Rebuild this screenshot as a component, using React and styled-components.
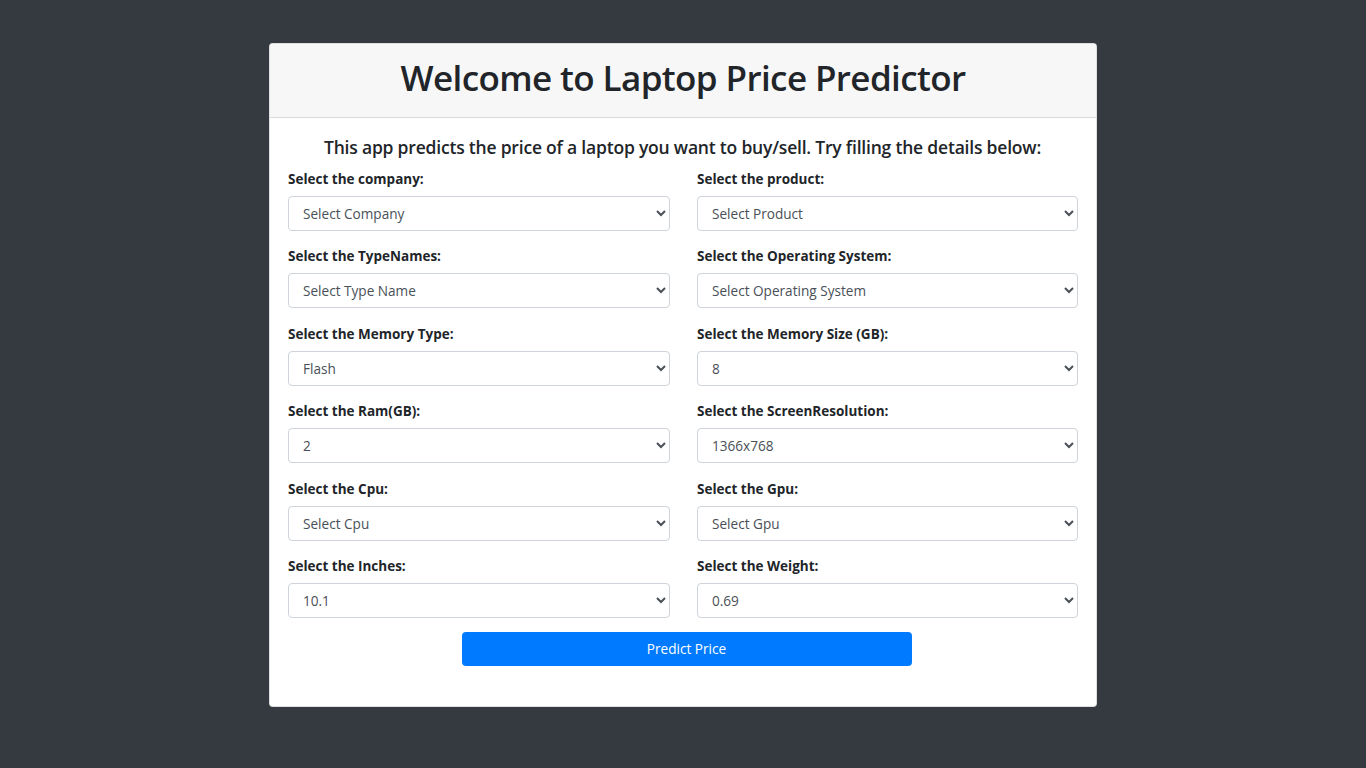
import React from 'react';
import styled, { createGlobalStyle } from 'styled-components';

const GlobalStyle = createGlobalStyle`
	html, body {
		margin: 0;
		background: #343a40;
		font-family: 'Open Sans', 'Liberation Sans', sans-serif;
		font-size: 14px;
		color: #212529;
	}
`;

const fields = [
	{ label: 'Select the company:', value: 'Select Company' },
	{ label: 'Select the product:', value: 'Select Product' },
	{ label: 'Select the TypeNames:', value: 'Select Type Name' },
	{ label: 'Select the Operating System:', value: 'Select Operating System' },
	{ label: 'Select the Memory Type:', value: 'Flash' },
	{ label: 'Select the Memory Size (GB):', value: '8' },
	{ label: 'Select the Ram(GB):', value: '2' },
	{ label: 'Select the ScreenResolution:', value: '1366x768' },
	{ label: 'Select the Cpu:', value: 'Select Cpu' },
	{ label: 'Select the Gpu:', value: 'Select Gpu' },
	{ label: 'Select the Inches:', value: '10.1' },
	{ label: 'Select the Weight:', value: '0.69' },
];

export default function App() {
	return (
		<>
			<GlobalStyle />
			<Page>
				<Card>
					<CardHeader>
						<Title>Welcome to Laptop Price Predictor</Title>
					</CardHeader>
					<CardBody>
						<Lead>This app predicts the price of a laptop you want to buy/sell. Try filling the details below:</Lead>
						<FormGrid>
							{fields.map(f => (
								<Group key={f.label}>
									<Label>{f.label}</Label>
									<Select defaultValue={f.value}>
										<option>{f.value}</option>
									</Select>
								</Group>
							))}
						</FormGrid>
						<ButtonRow>
							<PredictButton>Predict Price</PredictButton>
						</ButtonRow>
					</CardBody>
				</Card>
			</Page>
		</>
	);
}

const Page = styled.div`
	display: flex;
	justify-content: center;
	padding-top: 43px;
	min-height: 768px;
	box-sizing: border-box;
`;
const Card = styled.div`
	width: 828px;
	height: 664px;
	box-sizing: border-box;
	background: #fff;
	border: 1px solid rgba(0, 0, 0, 0.125);
	border-radius: 4px;
	overflow: hidden;
`;
const CardHeader = styled.div`
	height: 73px;
	background: #f7f7f7;
	border-bottom: 1px solid rgba(0, 0, 0, 0.125);
	display: flex;
	align-items: center;
	justify-content: center;
`;
const Title = styled.h1`
	margin: 0;
	font-size: 35px;
	font-weight: 600;
	letter-spacing: -0.6px;
	line-height: 1.2;
	padding-bottom: 6px;
`;
const CardBody = styled.div`
	padding: 17px 19px 0 18px;
`;
const Lead = styled.h5`
	margin: 0 0 10px;
	text-align: center;
	font-size: 17.5px;
	font-weight: 600;
	letter-spacing: -0.2px;
	line-height: 24px;
`;
const FormGrid = styled.div`
	display: grid;
	grid-template-columns: 382px 381px;
	column-gap: 27px;
`;
const Group = styled.div`
	display: flex;
	flex-direction: column;
	height: 77.4px;
`;
const Label = styled.label`
	font-weight: 700;
	font-size: 13.5px;
	line-height: 21px;
	margin-bottom: 6px;
`;
const Select = styled.select`
	height: 35px;
	box-sizing: border-box;
	border: 1px solid #ced4da;
	border-radius: 4px;
	background: #fff;
	color: #495057;
	font-family: inherit;
	font-size: 13.6px;
	padding: 0 8px 0 10px;
`;
const ButtonRow = styled.div`
	display: flex;
	justify-content: center;
	padding-left: 8px;
	margin-top: -1.5px;
`;
const PredictButton = styled.button`
	width: 450px;
	height: 34px;
	border: none;
	border-radius: 4px;
	background: #007bff;
	color: #fff;
	font-family: inherit;
	font-size: 13.6px;
`;
